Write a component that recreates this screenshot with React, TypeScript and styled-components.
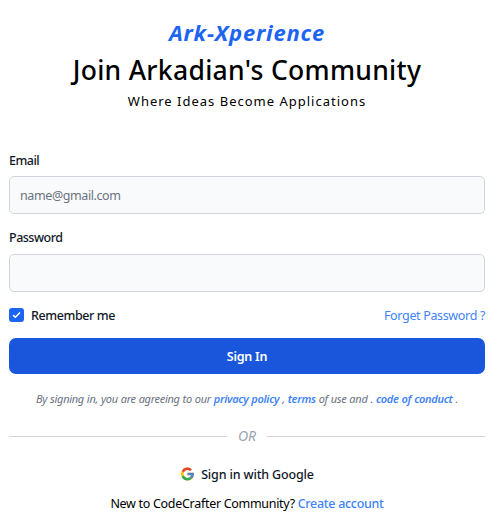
import React from "react";
import styled, { createGlobalStyle } from "styled-components";

const GlobalStyle = createGlobalStyle`
  * { box-sizing: border-box; }
  body {
    margin: 0;
    background: #fff;
    color: #000;
    font-family: "Noto Sans", "Open Sans", sans-serif;
    font-size: 12.5px;
    line-height: 20px;
  }
`;

const Page = styled.main`
  display: flex;
  flex-direction: column;
  height: 529px;
  padding: 16px 14px 0 9px;
  white-space: nowrap;
`;

const Header = styled.header`
  display: flex;
  flex-direction: column;
  align-items: center;
  text-align: center;
`;

const Brand = styled.div`
  color: #1c64f2;
  font-size: 22px;
  font-style: italic;
  font-weight: 700;
  line-height: 32px;
  letter-spacing: 0.8px;
`;

const Title = styled.h1`
  margin: 4px 0 0;
  font-size: 26.5px;
  font-weight: 500;
  line-height: 36px;
  letter-spacing: 0.3px;
`;

const Tagline = styled.p`
  margin: 3px 0 0;
  font-size: 13px;
  letter-spacing: 1px;
`;

const Form = styled.form`
  display: flex;
  flex-direction: column;
  margin-top: 39px;
`;

const Label = styled.label`
  margin: 0 0 4px;
  color: #111827;
  font-weight: 500;
  line-height: 22px;
  letter-spacing: -0.5px;
`;

const Input = styled.input`
  width: 100%;
  height: 38px;
  margin-bottom: 13px;
  padding: 0 10px;
  border: 1px solid #d1d5db;
  border-radius: 5px;
  background: #f9fafb;
  font: inherit;
  letter-spacing: -0.4px;
  &::placeholder { color: #6b7280; opacity: 1; }
  &[type="password"] { margin-top: 1px; }
`;

const Options = styled.div`
  display: flex;
  align-items: center;
  justify-content: space-between;
  height: 20px;
`;

const Remember = styled.label`
  display: flex;
  align-items: center;
  gap: 7px;
  color: #111827;
  font-weight: 500;
  letter-spacing: -0.4px;
`;

const Caption = styled.span`
  padding-top: 2px;
`;

const CheckBox = styled.span`
  display: grid;
  place-items: center;
  width: 15px;
  height: 14px;
  border-radius: 3px;
  background: #1c64f2;
`;

const Link = styled.a<{ $weight?: number }>`
  color: #3f83f8;
  font-weight: ${(p) => p.$weight ?? 400};
  text-decoration: none;
`;

const Forgot = styled(Link)`
  padding-top: 2px;
  letter-spacing: -0.34px;
`;

const SubmitButton = styled.button`
  height: 36px;
  margin-top: 13px;
  padding: 2px 0 0;
  border: 0;
  border-radius: 7px;
  background: #1a56db;
  color: #fff;
  font: inherit;
  font-weight: 600;
  letter-spacing: -0.25px;
`;

const Terms = styled.p`
  margin: 15px 0 0;
  color: #6b7280;
  font-size: 11px;
  font-style: italic;
  text-align: center;
  letter-spacing: -0.3px;
  word-spacing: 0.4px;
`;

const Divider = styled.div`
  display: flex;
  align-items: center;
  gap: 11px;
  margin-top: 17px;
  color: #9ca3af;
  font-size: 14px;
  font-style: italic;
`;

const Rule = styled.span`
  flex: 1;
  height: 1px;
  background: #d1d5db;
`;

const GoogleButton = styled.button`
  display: flex;
  align-items: center;
  justify-content: center;
  gap: 7px;
  height: 20px;
  margin-top: 18px;
  padding: 0 0 0 1px;
  border: 0;
  background: none;
  color: #111827;
  font: inherit;
  font-weight: 500;
  letter-spacing: -0.15px;
`;

const SignUp = styled.p`
  margin: 10px 0 0;
  text-align: center;
  letter-spacing: -0.3px;
`;

const GoogleLogo = () => (
  <svg width="13" height="14" viewBox="4 3 40 42">
    <path fill="#FFC107" d="M43.6 20.1H42V20H24v8h11.3A12 12 0 1 1 24 12c3.1 0 5.8 1.2 8 3l5.7-5.6A20 20 0 1 0 43.6 20.1z" />
    <path fill="#EA4335" d="M6.3 14.7l6.6 4.8A12 12 0 0 1 24 12c3.1 0 5.8 1.2 8 3l5.7-5.6A20 20 0 0 0 6.3 14.7z" />
    <path fill="#34A853" d="M24 44c5.2 0 9.9-2 13.4-5.2l-6.2-5.2A12 12 0 0 1 12.7 28l-6.5 5A20 20 0 0 0 24 44z" />
    <path fill="#5383ce" d="M43.6 20.1H42V20H24v8h11.3a12 12 0 0 1-4.1 5.6l6.2 5.2C37 39.2 44 34 44 24c0-1.3-.1-2.6-.4-3.9z" />
  </svg>
);

export default function App() {
  return (
    <>
      <GlobalStyle />
      <Page>
        <Header>
          <Brand>Ark-Xperience</Brand>
          <Title>Join Arkadian's Community</Title>
          <Tagline>Where Ideas Become Applications</Tagline>
        </Header>
        <Form>
          <Label htmlFor="email">Email</Label>
          <Input id="email" type="email" placeholder="name@gmail.com" />
          <Label htmlFor="password">Password</Label>
          <Input id="password" type="password" />
          <Options>
            <Remember>
              <CheckBox>
                <svg width="9" height="8" viewBox="0 0 9 8" fill="none" stroke="#fff" strokeWidth="1.5">
                  <path d="M1 4.1 3.4 6.3 8 1.5" />
                </svg>
              </CheckBox>
              <Caption>Remember me</Caption>
            </Remember>
            <Forgot>Forget Password ?</Forgot>
          </Options>
          <SubmitButton type="button">Sign In</SubmitButton>
          <Terms>
            By signing in, you are agreeing to our <Link $weight={600}>privacy policy</Link> ,{" "}
            <Link $weight={600}>terms</Link> of use and . <Link $weight={600}>code of conduct</Link> .
          </Terms>
          <Divider>
            <Rule />
            <span>OR</span>
            <Rule />
          </Divider>
          <GoogleButton type="button">
            <GoogleLogo />
            <Caption>Sign in with Google</Caption>
          </GoogleButton>
          <SignUp>
            New to CodeCrafter Community? <Link $weight={500}>Create account</Link>
          </SignUp>
        </Form>
      </Page>
    </>
  );
}
